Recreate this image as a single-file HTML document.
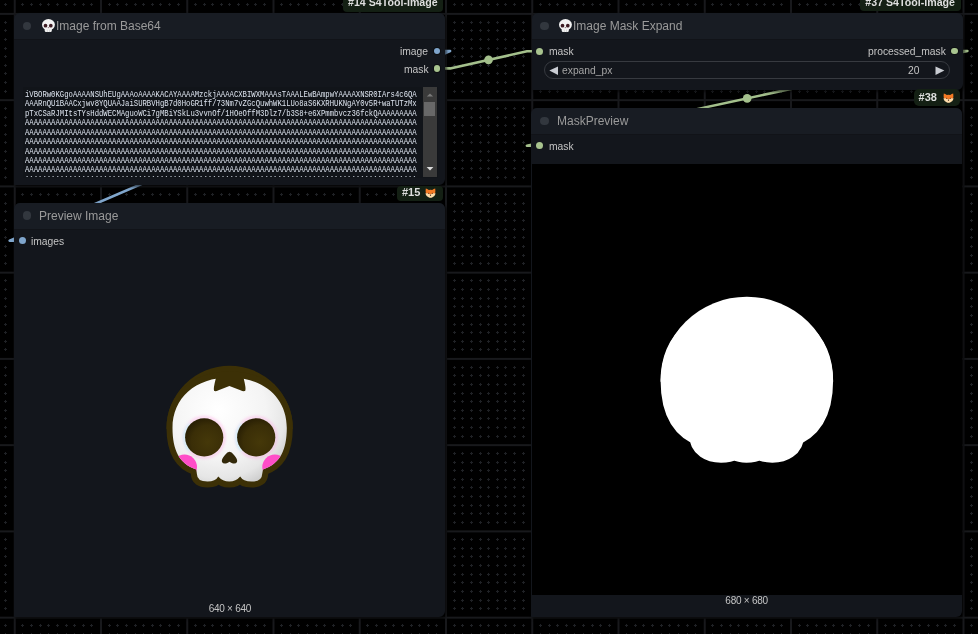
<!DOCTYPE html>
<html><head><meta charset="utf-8">
<style>
html,body{margin:0;padding:0;}
body{width:978px;height:634px;overflow:hidden;background:#000;position:relative;font-family:"Liberation Sans",sans-serif;}
.abs{position:absolute;}
.node{position:absolute;background:#13161c;border-radius:6px 6px 6px 1px;overflow:hidden;box-shadow:1.7px 1.7px 2.6px rgba(0,0,0,0.55);}
.title{position:absolute;left:0;right:0;top:0;height:27px;background:#181c23;border-bottom:1px solid #111318;box-sizing:border-box;}
.tdot{position:absolute;width:8.8px;height:8.8px;margin:-0.1px 0 0 -0.1px;border-radius:50%;background:#32373e;}
.ttext{will-change:transform;position:absolute;font-size:12px;color:#9a9a9a;white-space:nowrap;line-height:14px;}
.slot{will-change:transform;position:absolute;font-size:10.3px;color:#c4c4c4;white-space:nowrap;line-height:12px;}
.sr{text-align:right;}
.sdot{position:absolute;width:7px;height:7px;border-radius:50%;}
.badge{will-change:transform;position:absolute;background:#142014;border-radius:4px;color:#dedede;font-weight:bold;white-space:nowrap;font-size:10.65px;line-height:12px;}
.ta{position:absolute;font-family:"Liberation Mono",monospace;font-size:9.6px;line-height:9.45px;color:#dde4ef;white-space:pre;overflow:hidden;transform-origin:0 0;transform:scaleX(0.756);}
</style></head>
<body>
<!-- grid -->
<svg class="abs" style="left:0;top:0" width="978" height="634">
  <path d="M4 4.5h3M5.5 3v3M4 22.5h3M5.5 21v3M4 30.5h3M5.5 29v3M4 39.5h3M5.5 38v3M4 48.5h3M5.5 47v3M4 56.5h3M5.5 55v3M4 65.5h3M5.5 64v3M4 73.5h3M5.5 72v3M4 82.5h3M5.5 81v3M4 91.5h3M5.5 90v3M4 108.5h3M5.5 107v3M4 117.5h3M5.5 116v3M4 125.5h3M5.5 124v3M4 134.5h3M5.5 133v3M4 142.5h3M5.5 141v3M4 151.5h3M5.5 150v3M4 160.5h3M5.5 159v3M4 168.5h3M5.5 167v3M4 177.5h3M5.5 176v3M4 194.5h3M5.5 193v3M4 203.5h3M5.5 202v3M4 211.5h3M5.5 210v3M4 220.5h3M5.5 219v3M4 229.5h3M5.5 228v3M4 237.5h3M5.5 236v3M4 246.5h3M5.5 245v3M4 255.5h3M5.5 254v3M4 263.5h3M5.5 262v3M4 280.5h3M5.5 279v3M4 289.5h3M5.5 288v3M4 298.5h3M5.5 297v3M4 306.5h3M5.5 305v3M4 315.5h3M5.5 314v3M4 324.5h3M5.5 323v3M4 332.5h3M5.5 331v3M4 341.5h3M5.5 340v3M4 349.5h3M5.5 348v3M4 367.5h3M5.5 366v3M4 375.5h3M5.5 374v3M4 384.5h3M5.5 383v3M4 393.5h3M5.5 392v3M4 401.5h3M5.5 400v3M4 410.5h3M5.5 409v3M4 418.5h3M5.5 417v3M4 427.5h3M5.5 426v3M4 436.5h3M5.5 435v3M4 453.5h3M5.5 452v3M4 462.5h3M5.5 461v3M4 470.5h3M5.5 469v3M4 479.5h3M5.5 478v3M4 487.5h3M5.5 486v3M4 496.5h3M5.5 495v3M4 505.5h3M5.5 504v3M4 513.5h3M5.5 512v3M4 522.5h3M5.5 521v3M4 539.5h3M5.5 538v3M4 548.5h3M5.5 547v3M4 556.5h3M5.5 555v3M4 565.5h3M5.5 564v3M4 574.5h3M5.5 573v3M4 582.5h3M5.5 581v3M4 591.5h3M5.5 590v3M4 600.5h3M5.5 599v3M4 608.5h3M5.5 607v3M4 625.5h3M5.5 624v3M4 634.5h3M5.5 633v3M21 4.5h3M22.5 3v3M21 194.5h3M22.5 193v3M21 625.5h3M22.5 624v3M21 634.5h3M22.5 633v3M30 4.5h3M31.5 3v3M30 194.5h3M31.5 193v3M30 625.5h3M31.5 624v3M30 634.5h3M31.5 633v3M39 4.5h3M40.5 3v3M39 194.5h3M40.5 193v3M39 625.5h3M40.5 624v3M39 634.5h3M40.5 633v3M47 4.5h3M48.5 3v3M47 194.5h3M48.5 193v3M47 625.5h3M48.5 624v3M47 634.5h3M48.5 633v3M56 4.5h3M57.5 3v3M56 194.5h3M57.5 193v3M56 625.5h3M57.5 624v3M56 634.5h3M57.5 633v3M65 4.5h3M66.5 3v3M65 194.5h3M66.5 193v3M65 625.5h3M66.5 624v3M65 634.5h3M66.5 633v3M73 4.5h3M74.5 3v3M73 194.5h3M74.5 193v3M73 625.5h3M74.5 624v3M73 634.5h3M74.5 633v3M82 4.5h3M83.5 3v3M82 194.5h3M83.5 193v3M82 625.5h3M83.5 624v3M82 634.5h3M83.5 633v3M90 4.5h3M91.5 3v3M90 194.5h3M91.5 193v3M90 625.5h3M91.5 624v3M90 634.5h3M91.5 633v3M108 4.5h3M109.5 3v3M108 194.5h3M109.5 193v3M108 625.5h3M109.5 624v3M108 634.5h3M109.5 633v3M116 4.5h3M117.5 3v3M116 194.5h3M117.5 193v3M116 625.5h3M117.5 624v3M116 634.5h3M117.5 633v3M125 4.5h3M126.5 3v3M125 194.5h3M126.5 193v3M125 625.5h3M126.5 624v3M125 634.5h3M126.5 633v3M134 4.5h3M135.5 3v3M134 194.5h3M135.5 193v3M134 625.5h3M135.5 624v3M134 634.5h3M135.5 633v3M142 4.5h3M143.5 3v3M142 194.5h3M143.5 193v3M142 625.5h3M143.5 624v3M142 634.5h3M143.5 633v3M151 4.5h3M152.5 3v3M151 194.5h3M152.5 193v3M151 625.5h3M152.5 624v3M151 634.5h3M152.5 633v3M159 4.5h3M160.5 3v3M159 194.5h3M160.5 193v3M159 625.5h3M160.5 624v3M159 634.5h3M160.5 633v3M168 4.5h3M169.5 3v3M168 194.5h3M169.5 193v3M168 625.5h3M169.5 624v3M168 634.5h3M169.5 633v3M177 4.5h3M178.5 3v3M177 194.5h3M178.5 193v3M177 625.5h3M178.5 624v3M177 634.5h3M178.5 633v3M194 4.5h3M195.5 3v3M194 194.5h3M195.5 193v3M194 625.5h3M195.5 624v3M194 634.5h3M195.5 633v3M203 4.5h3M204.5 3v3M203 194.5h3M204.5 193v3M203 625.5h3M204.5 624v3M203 634.5h3M204.5 633v3M211 4.5h3M212.5 3v3M211 194.5h3M212.5 193v3M211 625.5h3M212.5 624v3M211 634.5h3M212.5 633v3M220 4.5h3M221.5 3v3M220 194.5h3M221.5 193v3M220 625.5h3M221.5 624v3M220 634.5h3M221.5 633v3M228 4.5h3M229.5 3v3M228 194.5h3M229.5 193v3M228 625.5h3M229.5 624v3M228 634.5h3M229.5 633v3M237 4.5h3M238.5 3v3M237 194.5h3M238.5 193v3M237 625.5h3M238.5 624v3M237 634.5h3M238.5 633v3M246 4.5h3M247.5 3v3M246 194.5h3M247.5 193v3M246 625.5h3M247.5 624v3M246 634.5h3M247.5 633v3M254 4.5h3M255.5 3v3M254 194.5h3M255.5 193v3M254 625.5h3M255.5 624v3M254 634.5h3M255.5 633v3M263 4.5h3M264.5 3v3M263 194.5h3M264.5 193v3M263 625.5h3M264.5 624v3M263 634.5h3M264.5 633v3M280 4.5h3M281.5 3v3M280 194.5h3M281.5 193v3M280 625.5h3M281.5 624v3M280 634.5h3M281.5 633v3M289 4.5h3M290.5 3v3M289 194.5h3M290.5 193v3M289 625.5h3M290.5 624v3M289 634.5h3M290.5 633v3M297 4.5h3M298.5 3v3M297 194.5h3M298.5 193v3M297 625.5h3M298.5 624v3M297 634.5h3M298.5 633v3M306 4.5h3M307.5 3v3M306 194.5h3M307.5 193v3M306 625.5h3M307.5 624v3M306 634.5h3M307.5 633v3M315 4.5h3M316.5 3v3M315 194.5h3M316.5 193v3M315 625.5h3M316.5 624v3M315 634.5h3M316.5 633v3M323 4.5h3M324.5 3v3M323 194.5h3M324.5 193v3M323 625.5h3M324.5 624v3M323 634.5h3M324.5 633v3M332 4.5h3M333.5 3v3M332 194.5h3M333.5 193v3M332 625.5h3M333.5 624v3M332 634.5h3M333.5 633v3M341 4.5h3M342.5 3v3M341 194.5h3M342.5 193v3M341 625.5h3M342.5 624v3M341 634.5h3M342.5 633v3M349 4.5h3M350.5 3v3M349 194.5h3M350.5 193v3M349 625.5h3M350.5 624v3M349 634.5h3M350.5 633v3M366 4.5h3M367.5 3v3M366 194.5h3M367.5 193v3M366 625.5h3M367.5 624v3M366 634.5h3M367.5 633v3M375 4.5h3M376.5 3v3M375 194.5h3M376.5 193v3M375 625.5h3M376.5 624v3M375 634.5h3M376.5 633v3M384 4.5h3M385.5 3v3M384 194.5h3M385.5 193v3M384 625.5h3M385.5 624v3M384 634.5h3M385.5 633v3M392 4.5h3M393.5 3v3M392 194.5h3M393.5 193v3M392 625.5h3M393.5 624v3M392 634.5h3M393.5 633v3M401 4.5h3M402.5 3v3M401 194.5h3M402.5 193v3M401 625.5h3M402.5 624v3M401 634.5h3M402.5 633v3M410 4.5h3M411.5 3v3M410 194.5h3M411.5 193v3M410 625.5h3M411.5 624v3M410 634.5h3M411.5 633v3M418 4.5h3M419.5 3v3M418 194.5h3M419.5 193v3M418 625.5h3M419.5 624v3M418 634.5h3M419.5 633v3M427 4.5h3M428.5 3v3M427 194.5h3M428.5 193v3M427 625.5h3M428.5 624v3M427 634.5h3M428.5 633v3M435 4.5h3M436.5 3v3M435 194.5h3M436.5 193v3M435 625.5h3M436.5 624v3M435 634.5h3M436.5 633v3M453 4.5h3M454.5 3v3M453 22.5h3M454.5 21v3M453 30.5h3M454.5 29v3M453 39.5h3M454.5 38v3M453 48.5h3M454.5 47v3M453 56.5h3M454.5 55v3M453 65.5h3M454.5 64v3M453 73.5h3M454.5 72v3M453 82.5h3M454.5 81v3M453 91.5h3M454.5 90v3M453 108.5h3M454.5 107v3M453 117.5h3M454.5 116v3M453 125.5h3M454.5 124v3M453 134.5h3M454.5 133v3M453 142.5h3M454.5 141v3M453 151.5h3M454.5 150v3M453 160.5h3M454.5 159v3M453 168.5h3M454.5 167v3M453 177.5h3M454.5 176v3M453 194.5h3M454.5 193v3M453 203.5h3M454.5 202v3M453 211.5h3M454.5 210v3M453 220.5h3M454.5 219v3M453 229.5h3M454.5 228v3M453 237.5h3M454.5 236v3M453 246.5h3M454.5 245v3M453 255.5h3M454.5 254v3M453 263.5h3M454.5 262v3M453 280.5h3M454.5 279v3M453 289.5h3M454.5 288v3M453 298.5h3M454.5 297v3M453 306.5h3M454.5 305v3M453 315.5h3M454.5 314v3M453 324.5h3M454.5 323v3M453 332.5h3M454.5 331v3M453 341.5h3M454.5 340v3M453 349.5h3M454.5 348v3M453 367.5h3M454.5 366v3M453 375.5h3M454.5 374v3M453 384.5h3M454.5 383v3M453 393.5h3M454.5 392v3M453 401.5h3M454.5 400v3M453 410.5h3M454.5 409v3M453 418.5h3M454.5 417v3M453 427.5h3M454.5 426v3M453 436.5h3M454.5 435v3M453 453.5h3M454.5 452v3M453 462.5h3M454.5 461v3M453 470.5h3M454.5 469v3M453 479.5h3M454.5 478v3M453 487.5h3M454.5 486v3M453 496.5h3M454.5 495v3M453 505.5h3M454.5 504v3M453 513.5h3M454.5 512v3M453 522.5h3M454.5 521v3M453 539.5h3M454.5 538v3M453 548.5h3M454.5 547v3M453 556.5h3M454.5 555v3M453 565.5h3M454.5 564v3M453 574.5h3M454.5 573v3M453 582.5h3M454.5 581v3M453 591.5h3M454.5 590v3M453 600.5h3M454.5 599v3M453 608.5h3M454.5 607v3M453 625.5h3M454.5 624v3M453 634.5h3M454.5 633v3M461 4.5h3M462.5 3v3M461 22.5h3M462.5 21v3M461 30.5h3M462.5 29v3M461 39.5h3M462.5 38v3M461 48.5h3M462.5 47v3M461 56.5h3M462.5 55v3M461 65.5h3M462.5 64v3M461 73.5h3M462.5 72v3M461 82.5h3M462.5 81v3M461 91.5h3M462.5 90v3M461 108.5h3M462.5 107v3M461 117.5h3M462.5 116v3M461 125.5h3M462.5 124v3M461 134.5h3M462.5 133v3M461 142.5h3M462.5 141v3M461 151.5h3M462.5 150v3M461 160.5h3M462.5 159v3M461 168.5h3M462.5 167v3M461 177.5h3M462.5 176v3M461 194.5h3M462.5 193v3M461 203.5h3M462.5 202v3M461 211.5h3M462.5 210v3M461 220.5h3M462.5 219v3M461 229.5h3M462.5 228v3M461 237.5h3M462.5 236v3M461 246.5h3M462.5 245v3M461 255.5h3M462.5 254v3M461 263.5h3M462.5 262v3M461 280.5h3M462.5 279v3M461 289.5h3M462.5 288v3M461 298.5h3M462.5 297v3M461 306.5h3M462.5 305v3M461 315.5h3M462.5 314v3M461 324.5h3M462.5 323v3M461 332.5h3M462.5 331v3M461 341.5h3M462.5 340v3M461 349.5h3M462.5 348v3M461 367.5h3M462.5 366v3M461 375.5h3M462.5 374v3M461 384.5h3M462.5 383v3M461 393.5h3M462.5 392v3M461 401.5h3M462.5 400v3M461 410.5h3M462.5 409v3M461 418.5h3M462.5 417v3M461 427.5h3M462.5 426v3M461 436.5h3M462.5 435v3M461 453.5h3M462.5 452v3M461 462.5h3M462.5 461v3M461 470.5h3M462.5 469v3M461 479.5h3M462.5 478v3M461 487.5h3M462.5 486v3M461 496.5h3M462.5 495v3M461 505.5h3M462.5 504v3M461 513.5h3M462.5 512v3M461 522.5h3M462.5 521v3M461 539.5h3M462.5 538v3M461 548.5h3M462.5 547v3M461 556.5h3M462.5 555v3M461 565.5h3M462.5 564v3M461 574.5h3M462.5 573v3M461 582.5h3M462.5 581v3M461 591.5h3M462.5 590v3M461 600.5h3M462.5 599v3M461 608.5h3M462.5 607v3M461 625.5h3M462.5 624v3M461 634.5h3M462.5 633v3M470 4.5h3M471.5 3v3M470 22.5h3M471.5 21v3M470 30.5h3M471.5 29v3M470 39.5h3M471.5 38v3M470 48.5h3M471.5 47v3M470 56.5h3M471.5 55v3M470 65.5h3M471.5 64v3M470 73.5h3M471.5 72v3M470 82.5h3M471.5 81v3M470 91.5h3M471.5 90v3M470 108.5h3M471.5 107v3M470 117.5h3M471.5 116v3M470 125.5h3M471.5 124v3M470 134.5h3M471.5 133v3M470 142.5h3M471.5 141v3M470 151.5h3M471.5 150v3M470 160.5h3M471.5 159v3M470 168.5h3M471.5 167v3M470 177.5h3M471.5 176v3M470 194.5h3M471.5 193v3M470 203.5h3M471.5 202v3M470 211.5h3M471.5 210v3M470 220.5h3M471.5 219v3M470 229.5h3M471.5 228v3M470 237.5h3M471.5 236v3M470 246.5h3M471.5 245v3M470 255.5h3M471.5 254v3M470 263.5h3M471.5 262v3M470 280.5h3M471.5 279v3M470 289.5h3M471.5 288v3M470 298.5h3M471.5 297v3M470 306.5h3M471.5 305v3M470 315.5h3M471.5 314v3M470 324.5h3M471.5 323v3M470 332.5h3M471.5 331v3M470 341.5h3M471.5 340v3M470 349.5h3M471.5 348v3M470 367.5h3M471.5 366v3M470 375.5h3M471.5 374v3M470 384.5h3M471.5 383v3M470 393.5h3M471.5 392v3M470 401.5h3M471.5 400v3M470 410.5h3M471.5 409v3M470 418.5h3M471.5 417v3M470 427.5h3M471.5 426v3M470 436.5h3M471.5 435v3M470 453.5h3M471.5 452v3M470 462.5h3M471.5 461v3M470 470.5h3M471.5 469v3M470 479.5h3M471.5 478v3M470 487.5h3M471.5 486v3M470 496.5h3M471.5 495v3M470 505.5h3M471.5 504v3M470 513.5h3M471.5 512v3M470 522.5h3M471.5 521v3M470 539.5h3M471.5 538v3M470 548.5h3M471.5 547v3M470 556.5h3M471.5 555v3M470 565.5h3M471.5 564v3M470 574.5h3M471.5 573v3M470 582.5h3M471.5 581v3M470 591.5h3M471.5 590v3M470 600.5h3M471.5 599v3M470 608.5h3M471.5 607v3M470 625.5h3M471.5 624v3M470 634.5h3M471.5 633v3M479 4.5h3M480.5 3v3M479 22.5h3M480.5 21v3M479 30.5h3M480.5 29v3M479 39.5h3M480.5 38v3M479 48.5h3M480.5 47v3M479 56.5h3M480.5 55v3M479 65.5h3M480.5 64v3M479 73.5h3M480.5 72v3M479 82.5h3M480.5 81v3M479 91.5h3M480.5 90v3M479 108.5h3M480.5 107v3M479 117.5h3M480.5 116v3M479 125.5h3M480.5 124v3M479 134.5h3M480.5 133v3M479 142.5h3M480.5 141v3M479 151.5h3M480.5 150v3M479 160.5h3M480.5 159v3M479 168.5h3M480.5 167v3M479 177.5h3M480.5 176v3M479 194.5h3M480.5 193v3M479 203.5h3M480.5 202v3M479 211.5h3M480.5 210v3M479 220.5h3M480.5 219v3M479 229.5h3M480.5 228v3M479 237.5h3M480.5 236v3M479 246.5h3M480.5 245v3M479 255.5h3M480.5 254v3M479 263.5h3M480.5 262v3M479 280.5h3M480.5 279v3M479 289.5h3M480.5 288v3M479 298.5h3M480.5 297v3M479 306.5h3M480.5 305v3M479 315.5h3M480.5 314v3M479 324.5h3M480.5 323v3M479 332.5h3M480.5 331v3M479 341.5h3M480.5 340v3M479 349.5h3M480.5 348v3M479 367.5h3M480.5 366v3M479 375.5h3M480.5 374v3M479 384.5h3M480.5 383v3M479 393.5h3M480.5 392v3M479 401.5h3M480.5 400v3M479 410.5h3M480.5 409v3M479 418.5h3M480.5 417v3M479 427.5h3M480.5 426v3M479 436.5h3M480.5 435v3M479 453.5h3M480.5 452v3M479 462.5h3M480.5 461v3M479 470.5h3M480.5 469v3M479 479.5h3M480.5 478v3M479 487.5h3M480.5 486v3M479 496.5h3M480.5 495v3M479 505.5h3M480.5 504v3M479 513.5h3M480.5 512v3M479 522.5h3M480.5 521v3M479 539.5h3M480.5 538v3M479 548.5h3M480.5 547v3M479 556.5h3M480.5 555v3M479 565.5h3M480.5 564v3M479 574.5h3M480.5 573v3M479 582.5h3M480.5 581v3M479 591.5h3M480.5 590v3M479 600.5h3M480.5 599v3M479 608.5h3M480.5 607v3M479 625.5h3M480.5 624v3M479 634.5h3M480.5 633v3M487 4.5h3M488.5 3v3M487 22.5h3M488.5 21v3M487 30.5h3M488.5 29v3M487 39.5h3M488.5 38v3M487 48.5h3M488.5 47v3M487 56.5h3M488.5 55v3M487 65.5h3M488.5 64v3M487 73.5h3M488.5 72v3M487 82.5h3M488.5 81v3M487 91.5h3M488.5 90v3M487 108.5h3M488.5 107v3M487 117.5h3M488.5 116v3M487 125.5h3M488.5 124v3M487 134.5h3M488.5 133v3M487 142.5h3M488.5 141v3M487 151.5h3M488.5 150v3M487 160.5h3M488.5 159v3M487 168.5h3M488.5 167v3M487 177.5h3M488.5 176v3M487 194.5h3M488.5 193v3M487 203.5h3M488.5 202v3M487 211.5h3M488.5 210v3M487 220.5h3M488.5 219v3M487 229.5h3M488.5 228v3M487 237.5h3M488.5 236v3M487 246.5h3M488.5 245v3M487 255.5h3M488.5 254v3M487 263.5h3M488.5 262v3M487 280.5h3M488.5 279v3M487 289.5h3M488.5 288v3M487 298.5h3M488.5 297v3M487 306.5h3M488.5 305v3M487 315.5h3M488.5 314v3M487 324.5h3M488.5 323v3M487 332.5h3M488.5 331v3M487 341.5h3M488.5 340v3M487 349.5h3M488.5 348v3M487 367.5h3M488.5 366v3M487 375.5h3M488.5 374v3M487 384.5h3M488.5 383v3M487 393.5h3M488.5 392v3M487 401.5h3M488.5 400v3M487 410.5h3M488.5 409v3M487 418.5h3M488.5 417v3M487 427.5h3M488.5 426v3M487 436.5h3M488.5 435v3M487 453.5h3M488.5 452v3M487 462.5h3M488.5 461v3M487 470.5h3M488.5 469v3M487 479.5h3M488.5 478v3M487 487.5h3M488.5 486v3M487 496.5h3M488.5 495v3M487 505.5h3M488.5 504v3M487 513.5h3M488.5 512v3M487 522.5h3M488.5 521v3M487 539.5h3M488.5 538v3M487 548.5h3M488.5 547v3M487 556.5h3M488.5 555v3M487 565.5h3M488.5 564v3M487 574.5h3M488.5 573v3M487 582.5h3M488.5 581v3M487 591.5h3M488.5 590v3M487 600.5h3M488.5 599v3M487 608.5h3M488.5 607v3M487 625.5h3M488.5 624v3M487 634.5h3M488.5 633v3M496 4.5h3M497.5 3v3M496 22.5h3M497.5 21v3M496 30.5h3M497.5 29v3M496 39.5h3M497.5 38v3M496 48.5h3M497.5 47v3M496 56.5h3M497.5 55v3M496 65.5h3M497.5 64v3M496 73.5h3M497.5 72v3M496 82.5h3M497.5 81v3M496 91.5h3M497.5 90v3M496 108.5h3M497.5 107v3M496 117.5h3M497.5 116v3M496 125.5h3M497.5 124v3M496 134.5h3M497.5 133v3M496 142.5h3M497.5 141v3M496 151.5h3M497.5 150v3M496 160.5h3M497.5 159v3M496 168.5h3M497.5 167v3M496 177.5h3M497.5 176v3M496 194.5h3M497.5 193v3M496 203.5h3M497.5 202v3M496 211.5h3M497.5 210v3M496 220.5h3M497.5 219v3M496 229.5h3M497.5 228v3M496 237.5h3M497.5 236v3M496 246.5h3M497.5 245v3M496 255.5h3M497.5 254v3M496 263.5h3M497.5 262v3M496 280.5h3M497.5 279v3M496 289.5h3M497.5 288v3M496 298.5h3M497.5 297v3M496 306.5h3M497.5 305v3M496 315.5h3M497.5 314v3M496 324.5h3M497.5 323v3M496 332.5h3M497.5 331v3M496 341.5h3M497.5 340v3M496 349.5h3M497.5 348v3M496 367.5h3M497.5 366v3M496 375.5h3M497.5 374v3M496 384.5h3M497.5 383v3M496 393.5h3M497.5 392v3M496 401.5h3M497.5 400v3M496 410.5h3M497.5 409v3M496 418.5h3M497.5 417v3M496 427.5h3M497.5 426v3M496 436.5h3M497.5 435v3M496 453.5h3M497.5 452v3M496 462.5h3M497.5 461v3M496 470.5h3M497.5 469v3M496 479.5h3M497.5 478v3M496 487.5h3M497.5 486v3M496 496.5h3M497.5 495v3M496 505.5h3M497.5 504v3M496 513.5h3M497.5 512v3M496 522.5h3M497.5 521v3M496 539.5h3M497.5 538v3M496 548.5h3M497.5 547v3M496 556.5h3M497.5 555v3M496 565.5h3M497.5 564v3M496 574.5h3M497.5 573v3M496 582.5h3M497.5 581v3M496 591.5h3M497.5 590v3M496 600.5h3M497.5 599v3M496 608.5h3M497.5 607v3M496 625.5h3M497.5 624v3M496 634.5h3M497.5 633v3M504 4.5h3M505.5 3v3M504 22.5h3M505.5 21v3M504 30.5h3M505.5 29v3M504 39.5h3M505.5 38v3M504 48.5h3M505.5 47v3M504 56.5h3M505.5 55v3M504 65.5h3M505.5 64v3M504 73.5h3M505.5 72v3M504 82.5h3M505.5 81v3M504 91.5h3M505.5 90v3M504 108.5h3M505.5 107v3M504 117.5h3M505.5 116v3M504 125.5h3M505.5 124v3M504 134.5h3M505.5 133v3M504 142.5h3M505.5 141v3M504 151.5h3M505.5 150v3M504 160.5h3M505.5 159v3M504 168.5h3M505.5 167v3M504 177.5h3M505.5 176v3M504 194.5h3M505.5 193v3M504 203.5h3M505.5 202v3M504 211.5h3M505.5 210v3M504 220.5h3M505.5 219v3M504 229.5h3M505.5 228v3M504 237.5h3M505.5 236v3M504 246.5h3M505.5 245v3M504 255.5h3M505.5 254v3M504 263.5h3M505.5 262v3M504 280.5h3M505.5 279v3M504 289.5h3M505.5 288v3M504 298.5h3M505.5 297v3M504 306.5h3M505.5 305v3M504 315.5h3M505.5 314v3M504 324.5h3M505.5 323v3M504 332.5h3M505.5 331v3M504 341.5h3M505.5 340v3M504 349.5h3M505.5 348v3M504 367.5h3M505.5 366v3M504 375.5h3M505.5 374v3M504 384.5h3M505.5 383v3M504 393.5h3M505.5 392v3M504 401.5h3M505.5 400v3M504 410.5h3M505.5 409v3M504 418.5h3M505.5 417v3M504 427.5h3M505.5 426v3M504 436.5h3M505.5 435v3M504 453.5h3M505.5 452v3M504 462.5h3M505.5 461v3M504 470.5h3M505.5 469v3M504 479.5h3M505.5 478v3M504 487.5h3M505.5 486v3M504 496.5h3M505.5 495v3M504 505.5h3M505.5 504v3M504 513.5h3M505.5 512v3M504 522.5h3M505.5 521v3M504 539.5h3M505.5 538v3M504 548.5h3M505.5 547v3M504 556.5h3M505.5 555v3M504 565.5h3M505.5 564v3M504 574.5h3M505.5 573v3M504 582.5h3M505.5 581v3M504 591.5h3M505.5 590v3M504 600.5h3M505.5 599v3M504 608.5h3M505.5 607v3M504 625.5h3M505.5 624v3M504 634.5h3M505.5 633v3M513 4.5h3M514.5 3v3M513 22.5h3M514.5 21v3M513 30.5h3M514.5 29v3M513 39.5h3M514.5 38v3M513 48.5h3M514.5 47v3M513 56.5h3M514.5 55v3M513 65.5h3M514.5 64v3M513 73.5h3M514.5 72v3M513 82.5h3M514.5 81v3M513 91.5h3M514.5 90v3M513 108.5h3M514.5 107v3M513 117.5h3M514.5 116v3M513 125.5h3M514.5 124v3M513 134.5h3M514.5 133v3M513 142.5h3M514.5 141v3M513 151.5h3M514.5 150v3M513 160.5h3M514.5 159v3M513 168.5h3M514.5 167v3M513 177.5h3M514.5 176v3M513 194.5h3M514.5 193v3M513 203.5h3M514.5 202v3M513 211.5h3M514.5 210v3M513 220.5h3M514.5 219v3M513 229.5h3M514.5 228v3M513 237.5h3M514.5 236v3M513 246.5h3M514.5 245v3M513 255.5h3M514.5 254v3M513 263.5h3M514.5 262v3M513 280.5h3M514.5 279v3M513 289.5h3M514.5 288v3M513 298.5h3M514.5 297v3M513 306.5h3M514.5 305v3M513 315.5h3M514.5 314v3M513 324.5h3M514.5 323v3M513 332.5h3M514.5 331v3M513 341.5h3M514.5 340v3M513 349.5h3M514.5 348v3M513 367.5h3M514.5 366v3M513 375.5h3M514.5 374v3M513 384.5h3M514.5 383v3M513 393.5h3M514.5 392v3M513 401.5h3M514.5 400v3M513 410.5h3M514.5 409v3M513 418.5h3M514.5 417v3M513 427.5h3M514.5 426v3M513 436.5h3M514.5 435v3M513 453.5h3M514.5 452v3M513 462.5h3M514.5 461v3M513 470.5h3M514.5 469v3M513 479.5h3M514.5 478v3M513 487.5h3M514.5 486v3M513 496.5h3M514.5 495v3M513 505.5h3M514.5 504v3M513 513.5h3M514.5 512v3M513 522.5h3M514.5 521v3M513 539.5h3M514.5 538v3M513 548.5h3M514.5 547v3M513 556.5h3M514.5 555v3M513 565.5h3M514.5 564v3M513 574.5h3M514.5 573v3M513 582.5h3M514.5 581v3M513 591.5h3M514.5 590v3M513 600.5h3M514.5 599v3M513 608.5h3M514.5 607v3M513 625.5h3M514.5 624v3M513 634.5h3M514.5 633v3M522 4.5h3M523.5 3v3M522 22.5h3M523.5 21v3M522 30.5h3M523.5 29v3M522 39.5h3M523.5 38v3M522 48.5h3M523.5 47v3M522 56.5h3M523.5 55v3M522 65.5h3M523.5 64v3M522 73.5h3M523.5 72v3M522 82.5h3M523.5 81v3M522 91.5h3M523.5 90v3M522 108.5h3M523.5 107v3M522 117.5h3M523.5 116v3M522 125.5h3M523.5 124v3M522 134.5h3M523.5 133v3M522 142.5h3M523.5 141v3M522 151.5h3M523.5 150v3M522 160.5h3M523.5 159v3M522 168.5h3M523.5 167v3M522 177.5h3M523.5 176v3M522 194.5h3M523.5 193v3M522 203.5h3M523.5 202v3M522 211.5h3M523.5 210v3M522 220.5h3M523.5 219v3M522 229.5h3M523.5 228v3M522 237.5h3M523.5 236v3M522 246.5h3M523.5 245v3M522 255.5h3M523.5 254v3M522 263.5h3M523.5 262v3M522 280.5h3M523.5 279v3M522 289.5h3M523.5 288v3M522 298.5h3M523.5 297v3M522 306.5h3M523.5 305v3M522 315.5h3M523.5 314v3M522 324.5h3M523.5 323v3M522 332.5h3M523.5 331v3M522 341.5h3M523.5 340v3M522 349.5h3M523.5 348v3M522 367.5h3M523.5 366v3M522 375.5h3M523.5 374v3M522 384.5h3M523.5 383v3M522 393.5h3M523.5 392v3M522 401.5h3M523.5 400v3M522 410.5h3M523.5 409v3M522 418.5h3M523.5 417v3M522 427.5h3M523.5 426v3M522 436.5h3M523.5 435v3M522 453.5h3M523.5 452v3M522 462.5h3M523.5 461v3M522 470.5h3M523.5 469v3M522 479.5h3M523.5 478v3M522 487.5h3M523.5 486v3M522 496.5h3M523.5 495v3M522 505.5h3M523.5 504v3M522 513.5h3M523.5 512v3M522 522.5h3M523.5 521v3M522 539.5h3M523.5 538v3M522 548.5h3M523.5 547v3M522 556.5h3M523.5 555v3M522 565.5h3M523.5 564v3M522 574.5h3M523.5 573v3M522 582.5h3M523.5 581v3M522 591.5h3M523.5 590v3M522 600.5h3M523.5 599v3M522 608.5h3M523.5 607v3M522 625.5h3M523.5 624v3M522 634.5h3M523.5 633v3M539 4.5h3M540.5 3v3M539 91.5h3M540.5 90v3M539 625.5h3M540.5 624v3M539 634.5h3M540.5 633v3M548 4.5h3M549.5 3v3M548 91.5h3M549.5 90v3M548 625.5h3M549.5 624v3M548 634.5h3M549.5 633v3M556 4.5h3M557.5 3v3M556 91.5h3M557.5 90v3M556 625.5h3M557.5 624v3M556 634.5h3M557.5 633v3M565 4.5h3M566.5 3v3M565 91.5h3M566.5 90v3M565 625.5h3M566.5 624v3M565 634.5h3M566.5 633v3M573 4.5h3M574.5 3v3M573 91.5h3M574.5 90v3M573 625.5h3M574.5 624v3M573 634.5h3M574.5 633v3M582 4.5h3M583.5 3v3M582 91.5h3M583.5 90v3M582 625.5h3M583.5 624v3M582 634.5h3M583.5 633v3M591 4.5h3M592.5 3v3M591 91.5h3M592.5 90v3M591 625.5h3M592.5 624v3M591 634.5h3M592.5 633v3M599 4.5h3M600.5 3v3M599 91.5h3M600.5 90v3M599 625.5h3M600.5 624v3M599 634.5h3M600.5 633v3M608 4.5h3M609.5 3v3M608 91.5h3M609.5 90v3M608 625.5h3M609.5 624v3M608 634.5h3M609.5 633v3M625 4.5h3M626.5 3v3M625 91.5h3M626.5 90v3M625 625.5h3M626.5 624v3M625 634.5h3M626.5 633v3M634 4.5h3M635.5 3v3M634 91.5h3M635.5 90v3M634 625.5h3M635.5 624v3M634 634.5h3M635.5 633v3M642 4.5h3M643.5 3v3M642 91.5h3M643.5 90v3M642 625.5h3M643.5 624v3M642 634.5h3M643.5 633v3M651 4.5h3M652.5 3v3M651 91.5h3M652.5 90v3M651 625.5h3M652.5 624v3M651 634.5h3M652.5 633v3M660 4.5h3M661.5 3v3M660 91.5h3M661.5 90v3M660 625.5h3M661.5 624v3M660 634.5h3M661.5 633v3M668 4.5h3M669.5 3v3M668 91.5h3M669.5 90v3M668 625.5h3M669.5 624v3M668 634.5h3M669.5 633v3M677 4.5h3M678.5 3v3M677 91.5h3M678.5 90v3M677 625.5h3M678.5 624v3M677 634.5h3M678.5 633v3M686 4.5h3M687.5 3v3M686 91.5h3M687.5 90v3M686 625.5h3M687.5 624v3M686 634.5h3M687.5 633v3M694 4.5h3M695.5 3v3M694 91.5h3M695.5 90v3M694 625.5h3M695.5 624v3M694 634.5h3M695.5 633v3M711 4.5h3M712.5 3v3M711 91.5h3M712.5 90v3M711 625.5h3M712.5 624v3M711 634.5h3M712.5 633v3M720 4.5h3M721.5 3v3M720 91.5h3M721.5 90v3M720 625.5h3M721.5 624v3M720 634.5h3M721.5 633v3M729 4.5h3M730.5 3v3M729 91.5h3M730.5 90v3M729 625.5h3M730.5 624v3M729 634.5h3M730.5 633v3M737 4.5h3M738.5 3v3M737 91.5h3M738.5 90v3M737 625.5h3M738.5 624v3M737 634.5h3M738.5 633v3M746 4.5h3M747.5 3v3M746 91.5h3M747.5 90v3M746 625.5h3M747.5 624v3M746 634.5h3M747.5 633v3M755 4.5h3M756.5 3v3M755 91.5h3M756.5 90v3M755 625.5h3M756.5 624v3M755 634.5h3M756.5 633v3M763 4.5h3M764.5 3v3M763 91.5h3M764.5 90v3M763 625.5h3M764.5 624v3M763 634.5h3M764.5 633v3M772 4.5h3M773.5 3v3M772 91.5h3M773.5 90v3M772 625.5h3M773.5 624v3M772 634.5h3M773.5 633v3M780 4.5h3M781.5 3v3M780 91.5h3M781.5 90v3M780 625.5h3M781.5 624v3M780 634.5h3M781.5 633v3M798 4.5h3M799.5 3v3M798 91.5h3M799.5 90v3M798 625.5h3M799.5 624v3M798 634.5h3M799.5 633v3M806 4.5h3M807.5 3v3M806 91.5h3M807.5 90v3M806 625.5h3M807.5 624v3M806 634.5h3M807.5 633v3M815 4.5h3M816.5 3v3M815 91.5h3M816.5 90v3M815 625.5h3M816.5 624v3M815 634.5h3M816.5 633v3M824 4.5h3M825.5 3v3M824 91.5h3M825.5 90v3M824 625.5h3M825.5 624v3M824 634.5h3M825.5 633v3M832 4.5h3M833.5 3v3M832 91.5h3M833.5 90v3M832 625.5h3M833.5 624v3M832 634.5h3M833.5 633v3M841 4.5h3M842.5 3v3M841 91.5h3M842.5 90v3M841 625.5h3M842.5 624v3M841 634.5h3M842.5 633v3M849 4.5h3M850.5 3v3M849 91.5h3M850.5 90v3M849 625.5h3M850.5 624v3M849 634.5h3M850.5 633v3M858 4.5h3M859.5 3v3M858 91.5h3M859.5 90v3M858 625.5h3M859.5 624v3M858 634.5h3M859.5 633v3M867 4.5h3M868.5 3v3M867 91.5h3M868.5 90v3M867 625.5h3M868.5 624v3M867 634.5h3M868.5 633v3M884 4.5h3M885.5 3v3M884 91.5h3M885.5 90v3M884 625.5h3M885.5 624v3M884 634.5h3M885.5 633v3M893 4.5h3M894.5 3v3M893 91.5h3M894.5 90v3M893 625.5h3M894.5 624v3M893 634.5h3M894.5 633v3M901 4.5h3M902.5 3v3M901 91.5h3M902.5 90v3M901 625.5h3M902.5 624v3M901 634.5h3M902.5 633v3M910 4.5h3M911.5 3v3M910 91.5h3M911.5 90v3M910 625.5h3M911.5 624v3M910 634.5h3M911.5 633v3M918 4.5h3M919.5 3v3M918 91.5h3M919.5 90v3M918 625.5h3M919.5 624v3M918 634.5h3M919.5 633v3M927 4.5h3M928.5 3v3M927 91.5h3M928.5 90v3M927 625.5h3M928.5 624v3M927 634.5h3M928.5 633v3M936 4.5h3M937.5 3v3M936 91.5h3M937.5 90v3M936 625.5h3M937.5 624v3M936 634.5h3M937.5 633v3M944 4.5h3M945.5 3v3M944 91.5h3M945.5 90v3M944 625.5h3M945.5 624v3M944 634.5h3M945.5 633v3M953 4.5h3M954.5 3v3M953 91.5h3M954.5 90v3M953 625.5h3M954.5 624v3M953 634.5h3M954.5 633v3M970 4.5h3M971.5 3v3M970 22.5h3M971.5 21v3M970 30.5h3M971.5 29v3M970 39.5h3M971.5 38v3M970 48.5h3M971.5 47v3M970 56.5h3M971.5 55v3M970 65.5h3M971.5 64v3M970 73.5h3M971.5 72v3M970 82.5h3M971.5 81v3M970 91.5h3M971.5 90v3M970 108.5h3M971.5 107v3M970 117.5h3M971.5 116v3M970 125.5h3M971.5 124v3M970 134.5h3M971.5 133v3M970 142.5h3M971.5 141v3M970 151.5h3M971.5 150v3M970 160.5h3M971.5 159v3M970 168.5h3M971.5 167v3M970 177.5h3M971.5 176v3M970 194.5h3M971.5 193v3M970 203.5h3M971.5 202v3M970 211.5h3M971.5 210v3M970 220.5h3M971.5 219v3M970 229.5h3M971.5 228v3M970 237.5h3M971.5 236v3M970 246.5h3M971.5 245v3M970 255.5h3M971.5 254v3M970 263.5h3M971.5 262v3M970 280.5h3M971.5 279v3M970 289.5h3M971.5 288v3M970 298.5h3M971.5 297v3M970 306.5h3M971.5 305v3M970 315.5h3M971.5 314v3M970 324.5h3M971.5 323v3M970 332.5h3M971.5 331v3M970 341.5h3M971.5 340v3M970 349.5h3M971.5 348v3M970 367.5h3M971.5 366v3M970 375.5h3M971.5 374v3M970 384.5h3M971.5 383v3M970 393.5h3M971.5 392v3M970 401.5h3M971.5 400v3M970 410.5h3M971.5 409v3M970 418.5h3M971.5 417v3M970 427.5h3M971.5 426v3M970 436.5h3M971.5 435v3M970 453.5h3M971.5 452v3M970 462.5h3M971.5 461v3M970 470.5h3M971.5 469v3M970 479.5h3M971.5 478v3M970 487.5h3M971.5 486v3M970 496.5h3M971.5 495v3M970 505.5h3M971.5 504v3M970 513.5h3M971.5 512v3M970 522.5h3M971.5 521v3M970 539.5h3M971.5 538v3M970 548.5h3M971.5 547v3M970 556.5h3M971.5 555v3M970 565.5h3M971.5 564v3M970 574.5h3M971.5 573v3M970 582.5h3M971.5 581v3M970 591.5h3M971.5 590v3M970 600.5h3M971.5 599v3M970 608.5h3M971.5 607v3M970 625.5h3M971.5 624v3M970 634.5h3M971.5 633v3" stroke="#1f2125" stroke-width="1" fill="none"/>
  <g fill="#18191c"><rect x="13.75" y="0" width="2" height="634"/><rect x="100.00" y="0" width="2" height="634"/><rect x="186.25" y="0" width="2" height="634"/><rect x="272.50" y="0" width="2" height="634"/><rect x="358.75" y="0" width="2" height="634"/><rect x="445.00" y="0" width="2" height="634"/><rect x="531.25" y="0" width="2" height="634"/><rect x="617.50" y="0" width="2" height="634"/><rect x="703.75" y="0" width="2" height="634"/><rect x="790.00" y="0" width="2" height="634"/><rect x="876.25" y="0" width="2" height="634"/><rect x="962.50" y="0" width="2" height="634"/><rect x="0" y="12.90" width="978" height="2"/><rect x="0" y="99.15" width="978" height="2"/><rect x="0" y="185.40" width="978" height="2"/><rect x="0" y="271.65" width="978" height="2"/><rect x="0" y="357.90" width="978" height="2"/><rect x="0" y="444.15" width="978" height="2"/><rect x="0" y="530.40" width="978" height="2"/><rect x="0" y="616.65" width="978" height="2"/></g>
</svg>

<!-- links -->
<svg class="abs" style="left:0;top:0" width="978" height="634">
  <polyline points="437.2,51.1 450.1,51.1 9.7,240.7 22.6,240.7" fill="none" stroke="#80a6cc" stroke-width="2.6" stroke-linejoin="round"/>
  <polyline points="437.2,68.4 450.1,68.4 527,51.3 539.9,51.3" fill="none" stroke="#a4c08c" stroke-width="2.6" stroke-linejoin="round"/>
  <circle cx="488.55" cy="59.85" r="4.3" fill="#a4c08c"/>
  <polyline points="954.5,51 967.4,51 526.9,145.8 539.8,145.8" fill="none" stroke="#a4c08c" stroke-width="2.6" stroke-linejoin="round"/>
  <circle cx="747.15" cy="98.4" r="4.3" fill="#a4c08c"/>
</svg>

<!-- top badges (of nodes above, offscreen) -->
<div class="badge" style="left:343.3px;top:-6px;width:100px;height:17.6px;"><span class="abs" style="left:5px;top:1.6px;">#14 S4Tool-Image</span></div>
<div class="badge" style="left:860.3px;top:-6px;width:101px;height:17.4px;"><span class="abs" style="left:5.3px;top:1.6px;">#37 S4Tool-Image</span></div>

<!-- NODE 1: Image from Base64 -->
<div class="node" style="left:14px;top:13px;width:430.5px;height:172px;">
  <div class="title"></div>
  <div class="abs" style="left:9px;top:74px;width:414.5px;height:90.5px;background:#111419;"></div>
</div>
<div class="tdot" style="left:22.7px;top:21.7px;"></div>
<svg class="abs skull" style="left:40px;top:17px" width="18" height="18" viewBox="0 0 18 18"><use href="#skullico"/></svg>
<div class="ttext" style="left:55.6px;top:18.8px;">Image from Base64</div>
<div class="slot sr" style="right:549.6px;top:46.2px;">image</div>
<div class="slot sr" style="right:549.6px;top:63.8px;">mask</div>
<div class="sdot" style="left:433.9px;top:47.8px;width:6.6px;height:6.6px;background:#7fa5cc;box-shadow:0 0 0 1px #0d0f12;"></div>
<div class="sdot" style="left:433.9px;top:65.1px;width:6.6px;height:6.6px;background:#a9c48f;box-shadow:0 0 0 1px #0d0f12;"></div>
<div class="ta" style="left:24.6px;top:89.8px;width:520.5px;height:87.6px;">iVBORw0KGgoAAAANSUhEUgAAAoAAAAKACAYAAAAMzckjAAAACXBIWXMAAAsTAAALEwBAmpwYAAAAXNSR0IArs4c6QA
AAARnQU1BAACxjwv8YQUAAJaiSURBVHgB7d0HoGR1ff/73Nm7vZGcQuwhWK1LUo8aS6KXRHUKNgAY0v5R+waTUTzMx
pTxCSaRJMItsTYsHddWECMAguoWCi7gMBiYSkLu3vvnOf/1HOeOffM3Dlz7/b3S8+e6XPmmbvcz36fckQAAAAAAAAA
AAAAAAAAAAAAAAAAAAAAAAAAAAAAAAAAAAAAAAAAAAAAAAAAAAAAAAAAAAAAAAAAAAAAAAAAAAAAAAAAAAAAAAAAAA
AAAAAAAAAAAAAAAAAAAAAAAAAAAAAAAAAAAAAAAAAAAAAAAAAAAAAAAAAAAAAAAAAAAAAAAAAAAAAAAAAAAAAAAAAA
AAAAAAAAAAAAAAAAAAAAAAAAAAAAAAAAAAAAAAAAAAAAAAAAAAAAAAAAAAAAAAAAAAAAAAAAAAAAAAAAAAAAAAAAAA
AAAAAAAAAAAAAAAAAAAAAAAAAAAAAAAAAAAAAAAAAAAAAAAAAAAAAAAAAAAAAAAAAAAAAAAAAAAAAAAAAAAAAAAAAA
AAAAAAAAAAAAAAAAAAAAAAAAAAAAAAAAAAAAAAAAAAAAAAAAAAAAAAAAAAAAAAAAAAAAAAAAAAAAAAAAAAAAAAAAAA
AAAAAAAAAAAAAAAAAAAAAAAAAAAAAAAAAAAAAAAAAAAAAAAAAAAAAAAAAAAAAAAAAAAAAAAAAAAAAAAAAAAAAAAAAA
AAAAAAAAAAAAAAAAAAAAAAAAAAAAAAAAAAAAAAAAAAAAAAAAAAAAAAAAAAAAAAAAAAAAAAAAAAAAAAAAAAAAAAAAAA</div>
<!-- scrollbar -->
<div class="abs" style="left:423px;top:87px;width:14.2px;height:89.6px;background:#3a3a3a;"></div>
<div class="abs" style="left:423.8px;top:101.7px;width:11.4px;height:14.3px;background:#686868;"></div>
<svg class="abs" style="left:423px;top:87px" width="14" height="90"><polygon points="3.8,9.6 10.2,9.6 7,6.4" fill="#7a7a7a"/><polygon points="3.6,80 10.4,80 7,83.6" fill="#dcdcdc"/></svg>
<!-- badge 15 -->
<div class="badge" style="left:397px;top:185.8px;width:46px;height:15.1px;font-size:11px;"><span class="abs" style="left:4.9px;top:0px;">#15</span>
<svg class="abs" style="left:28.2px;top:1.5px" width="11" height="10" viewBox="0 0 11 10"><use href="#fox"/></svg></div>

<!-- NODE 2: Image Mask Expand -->
<div class="node" style="left:531.5px;top:13px;width:431.5px;height:76.5px;">
  <div class="title"></div>
</div>
<div class="tdot" style="left:539.8px;top:21.7px;"></div>
<svg class="abs" style="left:557px;top:17px" width="18" height="18" viewBox="0 0 18 18"><use href="#skullico"/></svg>
<div class="ttext" style="left:573.2px;top:18.9px;">Image Mask Expand</div>
<div class="sdot" style="left:536.3px;top:47.8px;background:#a9c48f;"></div>
<div class="slot" style="left:548.5px;top:46.1px;">mask</div>
<div class="slot sr" style="right:32.4px;top:46.2px;">processed_mask</div>
<div class="sdot" style="left:951.4px;top:47.7px;width:6.6px;height:6.6px;background:#a9c48f;box-shadow:0 0 0 1px #0d0f12;"></div>
<div class="abs" style="left:544px;top:61.3px;width:405.6px;height:17.6px;box-sizing:border-box;border:1px solid #373a40;border-radius:9px;background:#13161c;"></div>
<svg class="abs" style="left:549px;top:65.5px" width="10" height="10"><polygon points="0.3,4.6 9,0.4 9,8.9" fill="#c9ccd2"/></svg>
<div class="slot" style="left:561.9px;top:65.2px;color:#a4a4a4;">expand_px</div>
<div class="slot sr" style="right:58.7px;top:65.2px;color:#c4c4c4;">20</div>
<svg class="abs" style="left:935px;top:65.5px" width="10" height="10"><polygon points="9.4,4.6 0.5,0.4 0.5,8.9" fill="#c9ccd2"/></svg>
<!-- badge 38 -->
<div class="badge" style="left:914.4px;top:88.7px;width:46.2px;height:17.4px;font-size:11px;border-radius:5px;"><span class="abs" style="left:4.6px;top:2.3px;">#38</span>
<svg class="abs" style="left:28.6px;top:3.9px" width="11" height="10" viewBox="0 0 11 10"><use href="#fox"/></svg></div>

<!-- NODE 3: Preview Image -->
<div class="node" style="left:14px;top:203px;width:431px;height:413.5px;">
  <div class="title"></div>
</div>
<div class="tdot" style="left:22.7px;top:211.5px;"></div>
<div class="ttext" style="left:39.3px;top:208.8px;">Preview Image</div>
<div class="sdot" style="left:19.1px;top:237.2px;background:#7fa5cc;"></div>
<div class="slot" style="left:31.1px;top:236.1px;">images</div>
<div class="slot" style="left:0;width:459.8px;text-align:center;top:603.2px;font-size:10px;letter-spacing:-0.25px;">640 × 640</div>

<!-- NODE 4: MaskPreview -->
<div class="node" style="left:531.3px;top:108.2px;width:431.2px;height:508.6px;">
  <div class="title"></div>
  <div class="abs" style="left:0.6px;right:0.9px;top:56.1px;height:430.9px;background:#000;"></div>
</div>
<div class="tdot" style="left:539.8px;top:116.7px;"></div>
<div class="ttext" style="left:556.7px;top:114px;">MaskPreview</div>
<div class="sdot" style="left:536.3px;top:142.3px;background:#a9c48f;"></div>
<div class="slot" style="left:548.5px;top:140.9px;">mask</div>
<div class="slot" style="left:531.3px;width:431.2px;text-align:center;top:594.5px;font-size:10px;letter-spacing:-0.25px;">680 × 680</div>

<!-- big skull & mask -->
<svg class="abs" style="left:0;top:0" width="978" height="634">
  <defs>
    <path id="skp" d="M 172.5 428 C 172.5 398, 195.4 377.5, 229.65 377.5 C 263.9 377.5, 286.8 398, 286.8 428 C 286.8 450, 280 464, 263 469.5 L 262.2 474 Q 262 481.6 251.5 481.6 Q 243 481.6 240.2 476.6 Q 236 481.6 229.3 481.6 Q 222.5 481.6 218.3 476.6 Q 215.5 481.6 207.5 481.6 Q 197 481.6 196.9 474 L 196.3 469.5 C 179.3 464, 172.5 450, 172.5 428 Z"/>
    <clipPath id="skclip"><use href="#skp"/></clipPath>
    <radialGradient id="eyeg" cx="0.6" cy="0.62" r="0.62">
      <stop offset="0" stop-color="#453809"/><stop offset="0.7" stop-color="#3a2e07"/><stop offset="1" stop-color="#2a2004"/>
    </radialGradient>
    <radialGradient id="whg" gradientUnits="userSpaceOnUse" cx="218" cy="410" r="80"><stop offset="0" stop-color="#ffffff"/><stop offset="0.6" stop-color="#f4f4f4"/><stop offset="0.85" stop-color="#e6e6e6"/><stop offset="1" stop-color="#cfcfcf"/></radialGradient>
    <filter id="glow" x="-30%" y="-30%" width="160%" height="160%"><feGaussianBlur stdDeviation="1.6"/></filter>
  </defs>
  <path d="M 166.45 429 A 63.2 63.2 0 0 1 292.85 429 Z" fill="#3c3006"/>
  <use href="#skp" fill="#3c3006" stroke="#3c3006" stroke-width="12" stroke-linejoin="round"/>
  <use href="#skp" fill="url(#whg)"/>
  <g clip-path="url(#skclip)">
    <circle cx="184.5" cy="467" r="12.5" fill="#ff4ec8"/>
    <circle cx="274.8" cy="467" r="12.5" fill="#ff4ec8"/>
  </g>
  <path d="M 212 374 L 215.8 378.5 Q 213.2 388.5 214 390.8 Q 215.5 391.8 218.5 390.2 L 229.4 386 L 240.5 390.2 Q 243.5 391.8 245.3 390.8 Q 246.2 388.5 243.7 378.5 L 247.5 374 Z" fill="#3c3006"/>
  <g filter="url(#glow)" fill="none" stroke-width="2.2" opacity="0.55">
    <circle cx="204.2" cy="437.3" r="20" stroke="#ff9be0"/>
    <circle cx="256.2" cy="437.3" r="20" stroke="#ff9be0"/>
    <path d="M 190 424 A 20 20 0 0 0 190 451" stroke="#8fe8ff"/>
    <path d="M 242 424 A 20 20 0 0 0 242 451" stroke="#8fe8ff"/>
  </g>
  <circle cx="204.2" cy="437.3" r="19.1" fill="url(#eyeg)"/>
  <circle cx="256.2" cy="437.3" r="19.1" fill="url(#eyeg)"/>
  <path d="M 229.5 451.8 Q 231.5 451.8 234 455 Q 238 459.5 237 462 Q 236 464 233 463.5 Q 231 463 229.5 461.8 Q 228 463 226 463.5 Q 223 464 222 462 Q 221 459.5 225 455 Q 227.5 451.8 229.5 451.8 Z" fill="#33290a"/>
  <!-- mask -->
  <g transform="translate(746.85,379.75) scale(1.165) translate(-229.65,-427.3)" fill="#fff">
    <path d="M 155.6 429 A 74.05 73 0 0 1 303.7 429 Z"/>
    <use href="#skp" stroke="#fff" stroke-width="33.8" stroke-linejoin="round"/>
  </g>
</svg>

<!-- icon defs -->
<svg width="0" height="0" style="position:absolute">
  <defs>
    <g id="skullico">
      <ellipse cx="8.45" cy="7.7" rx="6.45" ry="5.6" fill="#f3f3f3"/>
      <rect x="4.7" y="10" width="7.1" height="5.1" rx="1.4" fill="#f3f3f3"/>
      <circle cx="5.5" cy="8.7" r="1.85" fill="#3e1c24"/>
      <circle cx="10.8" cy="8.7" r="1.85" fill="#3e1c24"/>
      <circle cx="8.3" cy="10.6" r="0.6" fill="#7a5a60"/>
      <rect x="6.9" y="12.6" width="0.5" height="2.5" fill="#b8b8b8"/>
      <rect x="9.3" y="12.6" width="0.5" height="2.5" fill="#b8b8b8"/>
    </g>
    <g id="fox">
      <path d="M0.8 0.4 Q2.2 0.6 3.8 2 Q5.5 1.4 7.2 2 Q8.8 0.6 10.2 0.4 Q10.6 3 10.2 5 L5.5 9.6 L0.8 5 Q0.4 3 0.8 0.4 Z" fill="#f47a24"/>
      <path d="M0.3 5.6 Q2.2 4.6 4 5.8 Q5.5 6.8 7 5.8 Q8.8 4.6 10.7 5.6 Q10 8.2 7.5 9.2 Q5.5 10.2 3.5 9.2 Q1 8.2 0.3 5.6 Z" fill="#fddcaa"/>
      <circle cx="3.7" cy="5.3" r="0.55" fill="#3a2418"/><circle cx="7.3" cy="5.3" r="0.55" fill="#3a2418"/>
      <circle cx="5.5" cy="7.2" r="0.6" fill="#3a2418"/>
    </g>
  </defs>
</svg>
</body></html>
